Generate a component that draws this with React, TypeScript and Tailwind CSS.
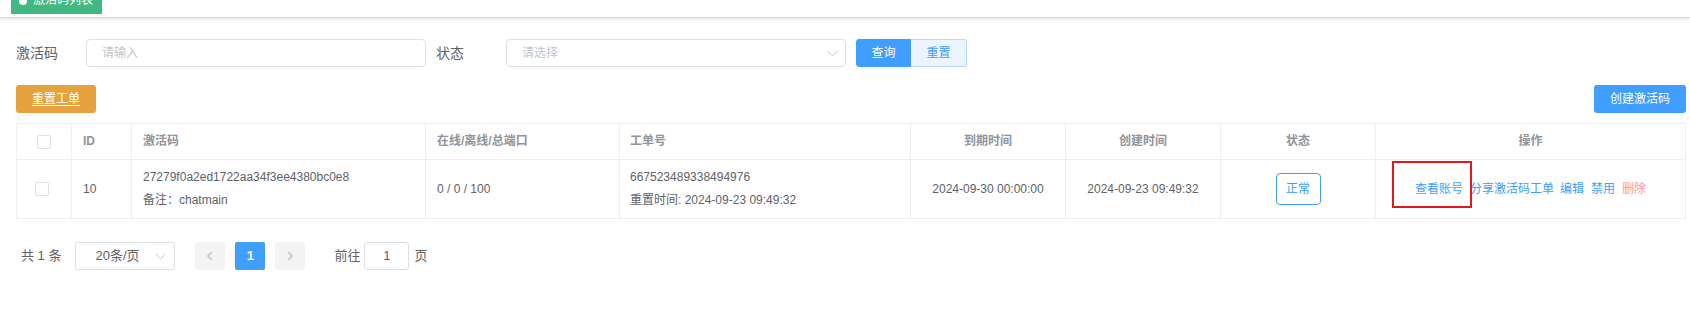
import React from "react";

const font = { fontFamily: '"Liberation Sans", "Noto Sans CJK SC", sans-serif' };

function Checkbox() {
  return <span className="inline-block w-[14px] h-[14px] border border-[#dcdfe6] rounded-[2px] bg-white box-border" />;
}

function ChevronDown({ className = "" }: { className?: string }) {
  return (
    <svg className={className} width="11" height="7" viewBox="0 0 11 7" fill="none">
      <polyline points="0.5,0.8 5.5,5.8 10.5,0.8" stroke="#c0c4cc" strokeWidth="1" fill="none" />
    </svg>
  );
}

function ChevronLeft() {
  return (
    <svg width="6" height="10" viewBox="0 0 6 10" fill="none">
      <polyline points="5,1 1,5 5,9" stroke="#c0c4cc" strokeWidth="1.6" fill="none" />
    </svg>
  );
}

function ChevronRight() {
  return (
    <svg width="6" height="10" viewBox="0 0 6 10" fill="none">
      <polyline points="1,1 5,5 1,9" stroke="#c0c4cc" strokeWidth="1.6" fill="none" />
    </svg>
  );
}

const cols = "grid grid-cols-[55px_60px_294px_194px_291px_155px_155px_155px_1fr]";

export default function App() {
  const headCell = "h-[36px] border-b border-r border-[#ebeef5] flex items-center text-[12px] font-bold text-[#909399] leading-[23px]";
  const bodyCell = "h-[58px] border-r border-[#ebeef5] flex items-center text-[12px] text-[#606266] leading-[23px]";
  return (
    <div className="w-[1690px] h-[334px] bg-white overflow-hidden" style={font}>
      {/* tags view */}
      <div className="h-[18px] flex items-start border-b border-[#d8dce5] shadow-[0_1px_3px_0_rgba(0,0,0,0.12),0_0_3px_0_rgba(0,0,0,0.04)] overflow-hidden bg-white box-border">
        <div className="ml-[11px] -mt-[13px] h-[27px] flex items-center pl-2 pr-[9px] bg-[#42b983] text-white text-[12px] leading-[27px]">
          <span className="w-2 h-2 rounded-full bg-white mr-[6px]" />
          <span>激活码列表</span>
        </div>
      </div>

      <div className="pl-4 pr-1">
        {/* search form */}
        <div className="mt-[21px] flex items-center h-[28px]">
          <label className="w-[70px] text-[14px] text-[#606266]">激活码</label>
          <div className="w-[340px] h-[28px] border border-[#dcdfe6] rounded-[4px] box-border flex items-center px-[15px] text-[12px] text-[#c0c4cc]">请输入</div>
          <label className="ml-[10px] w-[70px] text-[14px] text-[#606266]">状态</label>
          <div className="w-[340px] h-[28px] border border-[#dcdfe6] rounded-[4px] box-border flex items-center justify-between pl-[15px] pr-[7px] text-[12px] text-[#c0c4cc]">
            <span>请选择</span>
            <ChevronDown />
          </div>
          <div className="ml-[10px] flex">
            <div className="w-[55px] h-[28px] bg-[#409eff] border border-[#409eff] box-border rounded-l-[3px] flex items-center justify-center text-[12px] text-white">查询</div>
            <div className="w-[56px] h-[28px] bg-[#ecf5ff] border border-[#b3d8ff] border-l-0 box-border rounded-r-[3px] flex items-center justify-center text-[12px] text-[#409eff]">重置</div>
          </div>
        </div>

        {/* toolbar */}
        <div className="mt-[18px] flex justify-between">
          <div className="w-[80px] h-[28px] bg-[#e6a23c] rounded-[3px] flex items-center justify-center text-[12px] text-white underline underline-offset-2">重置工单</div>
          <div className="w-[92px] h-[28px] bg-[#409eff] rounded-[3px] flex items-center justify-center text-[12px] text-white">创建激活码</div>
        </div>

        {/* table */}
        <div className="mt-[10px] w-[1670px] border border-[#ebeef5] box-border">
          <div className={cols}>
            <div className={headCell + " justify-center"}><Checkbox /></div>
            <div className={headCell + " pl-[11px]"}>ID</div>
            <div className={headCell + " pl-[11px]"}>激活码</div>
            <div className={headCell + " pl-[11px]"}>在线/离线/总端口</div>
            <div className={headCell + " pl-[10px]"}>工单号</div>
            <div className={headCell + " justify-center"}>到期时间</div>
            <div className={headCell + " justify-center"}>创建时间</div>
            <div className={headCell + " justify-center"}>状态</div>
            <div className={headCell + " justify-center border-r-0"}>操作</div>
          </div>
          <div className={cols}>
            <div className={bodyCell + " justify-center pr-[4px]"}><Checkbox /></div>
            <div className={bodyCell + " pl-[11px]"}>10</div>
            <div className={bodyCell + " pl-[11px]"}>
              <div className="flex flex-col">
                <span>27279f0a2ed1722aa34f3ee4380bc0e8</span>
                <span>备注：chatmain</span>
              </div>
            </div>
            <div className={bodyCell + " pl-[11px]"}>0 / 0 / 100</div>
            <div className={bodyCell + " pl-[10px]"}>
              <div className="flex flex-col">
                <span>667523489338494976</span>
                <span>重置时间: 2024-09-23 09:49:32</span>
              </div>
            </div>
            <div className={bodyCell + " justify-center"}>2024-09-30 00:00:00</div>
            <div className={bodyCell + " justify-center"}>2024-09-23 09:49:32</div>
            <div className={bodyCell + " justify-center"}>
              <div className="w-[45px] h-[32px] border border-[#409eff] rounded-[4px] box-border flex items-center justify-center text-[12px] text-[#409eff] bg-white">正常</div>
            </div>
            <div className={bodyCell + " justify-center border-r-0 relative"}>
              <div className="flex items-center text-[12px] text-[#409eff]">
                <span>查看账号</span>
                <span className="ml-[7px]">分享激活码工单</span>
                <span className="ml-[6px]">编辑</span>
                <span className="ml-[7px]">禁用</span>
                <span className="ml-[7px] text-[#f89898]">删除</span>
              </div>
              <div className="absolute left-[16px] top-[1px] w-[80px] h-[47px] border-2 border-[#e8141e] box-border" />
            </div>
          </div>
        </div>

        {/* pagination */}
        <div className="mt-[23px] ml-[5px] flex items-center text-[13px] text-[#606266] h-[28px]">
          <span>共 1 条</span>
          <div className="ml-[14px] w-[100px] h-[28px] border border-[#dcdfe6] rounded-[3px] box-border flex items-center justify-between pl-[19px] pr-[8px]">
            <span>20条/页</span>
            <ChevronDown />
          </div>
          <div className="ml-[20px] w-[30px] h-[28px] bg-[#f4f4f5] rounded-[2px] flex items-center justify-center"><ChevronLeft /></div>
          <div className="ml-[10px] w-[30px] h-[28px] bg-[#409eff] rounded-[2px] flex items-center justify-center text-white font-bold">1</div>
          <div className="ml-[10px] w-[30px] h-[28px] bg-[#f4f4f5] rounded-[2px] flex items-center justify-center"><ChevronRight /></div>
          <span className="ml-[29px]">前往</span>
          <div className="ml-[4px] w-[45px] h-[28px] border border-[#dcdfe6] rounded-[3px] box-border flex items-center justify-center">1</div>
          <span className="ml-[5px]">页</span>
        </div>
      </div>
    </div>
  );
}
